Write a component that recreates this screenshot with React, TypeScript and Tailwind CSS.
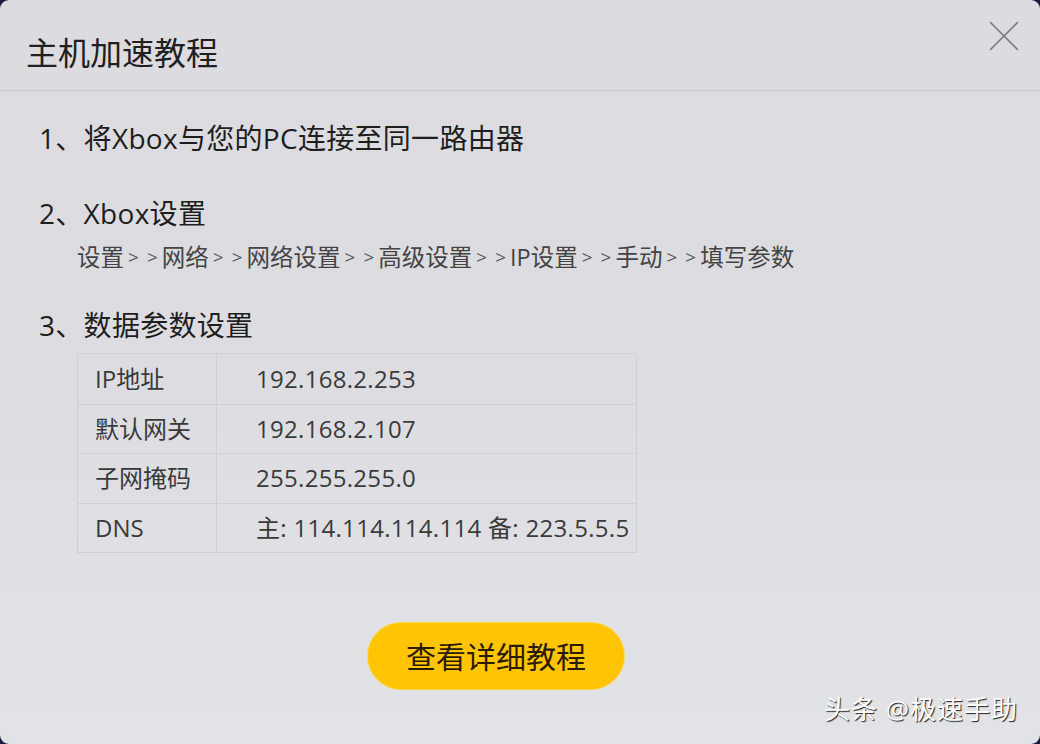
import React from "react";

const rows: [string, string][] = [
  ["IP地址", "192.168.2.253"],
  ["默认网关", "192.168.2.107"],
  ["子网掩码", "255.255.255.0"],
  ["DNS", "主: 114.114.114.114 备: 223.5.5.5"],
];

const path = ["设置", "网络", "网络设置", "高级设置", "IP设置", "手动", "填写参数"];

function CloseIcon() {
  return (
    <svg width="30" height="30" viewBox="0 0 30 30" className="block">
      <path d="M1 1 L29 29 M29 1 L1 29" stroke="#7a7a80" strokeWidth="1.6" fill="none" />
    </svg>
  );
}

export default function App() {
  return (
    <div className="w-[1040px] h-[744px] bg-[#1c1d3d] overflow-hidden">
      <div
        className="relative w-full h-full rounded-[9px] overflow-hidden bg-gradient-to-b from-[#dcdbe0] via-[#dddde1] to-[#e2e3e6] text-[#222]"
        style={{ fontFamily: '"Open Sans", "Noto Sans CJK SC", sans-serif' }}
      >
        {/* header */}
        <div className="h-[91px] border-b border-[#cbcbd0] flex items-start justify-between">
          <div className="pl-[26px] pt-[33px] text-[32px] leading-[40px] text-[#202020]">主机加速教程</div>
          <div className="pt-[21px] pr-[21px]">
            <CloseIcon />
          </div>
        </div>

        {/* steps */}
        <div className="pl-[39px]">
          <div className="mt-[27px] text-[28px] tracking-[0.3px] leading-[40px] text-[#1e1e1e]">
            1、将Xbox与您的PC连接至同一路由器
          </div>

          <div className="mt-[35px] text-[28px] tracking-[0.3px] leading-[40px] text-[#1e1e1e]">2、Xbox设置</div>
          <div className="mt-[8px] ml-[38px] flex items-center text-[23.5px] leading-[32px] text-[#444]">
            {path.map((p, i) => (
              <React.Fragment key={p + i}>
                <span>{p}</span>
                {i < path.length - 1 && (
                  <span className="flex gap-[8px] px-[4px] text-[19px] text-[#555]">
                    <span>&gt;</span>
                    <span>&gt;</span>
                  </span>
                )}
              </React.Fragment>
            ))}
          </div>

          <div className="mt-[32px] text-[28px] tracking-[0.3px] leading-[40px] text-[#1e1e1e]">3、数据参数设置</div>

          {/* parameters table */}
          <div className="mt-[8px] ml-[38px] w-[560px] border border-[#cfcfd4] text-[24px] text-[#3a3a3a]">
            {rows.map(([k, v], i) => (
              <div
                key={k}
                className={`flex h-[49.5px] items-center ${i > 0 ? "border-t border-[#cfcfd4]" : ""}`}
              >
                <div className="w-[139px] h-full flex items-center pl-[17px] border-r border-[#cfcfd4]">{k}</div>
                <div className="pl-[39px] whitespace-nowrap tracking-[0.3px]">{v}</div>
              </div>
            ))}
          </div>
        </div>

        {/* action */}
        <div className="mt-[70px] ml-[368px] w-[256px] h-[66px] rounded-full bg-[#ffc505] shadow-[0_0_0_1px_#ffd64a] flex items-center justify-center text-[30px] text-[#2a1c00]">
          查看详细教程
        </div>

        {/* source tag */}
        <div className="absolute right-[22px] bottom-[19px] text-[26px] tracking-[1px] leading-[32px] text-white [text-shadow:1px_1px_1px_rgba(0,0,0,0.85)]">
          头条 @极速手助
        </div>
      </div>
    </div>
  );
}
